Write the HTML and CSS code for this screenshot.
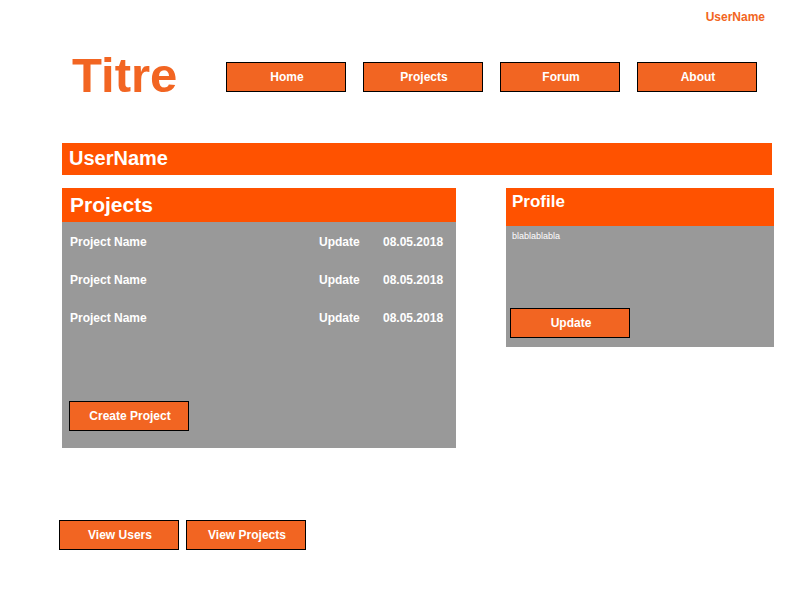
FILE: index.html
```html
<!DOCTYPE html>
<html lang="en">
<head>
<meta charset="utf-8">
<title>Titre</title>
<link rel="stylesheet" href="styles.css">
</head>
<body>
<div class="page">
  <div class="account"><a href="#">UserName</a></div>
  <header class="header">
    <h1 class="logo">Titre</h1>
    <nav class="nav">
      <a class="button" href="#">Home</a>
      <a class="button" href="#">Projects</a>
      <a class="button" href="#">Forum</a>
      <a class="button" href="#">About</a>
    </nav>
  </header>
  <h2 class="banner">UserName</h2>
  <main class="content">
    <section class="panel projects">
      <h2 class="panel-title">Projects</h2>
      <div class="panel-body">
        <table class="project-list">
          <tbody>
            <tr><td>Project Name</td><td class="action"><a href="#">Update</a></td><td class="date">08.05.2018</td></tr>
            <tr><td>Project Name</td><td class="action"><a href="#">Update</a></td><td class="date">08.05.2018</td></tr>
            <tr><td>Project Name</td><td class="action"><a href="#">Update</a></td><td class="date">08.05.2018</td></tr>
          </tbody>
        </table>
        <button class="button" type="button">Create Project</button>
      </div>
    </section>
    <section class="panel profile">
      <h2 class="panel-title">Profile</h2>
      <div class="panel-body">
        <p class="bio">blablablabla</p>
        <button class="button" type="button">Update</button>
      </div>
    </section>
  </main>
  <footer class="footer">
    <button class="button" type="button">View Users</button>
    <button class="button" type="button">View Projects</button>
  </footer>
</div>
</body>
</html>
```
FILE: styles.css
```css
* {
  box-sizing: border-box;
}

body {
  margin: 0;
  background: #fff;
  font: bold 12px/14px "Liberation Sans", Arial, sans-serif;
  color: #fff;
}

a {
  color: inherit;
  text-decoration: none;
}

h1,
h2,
p {
  margin: 0;
}

.page {
  padding: 10px 26px 50px 62px;
}

.account {
  padding-right: 9px;
  color: #f26522;
  text-align: right;
}

.button {
  display: block;
  width: 120px;
  height: 30px;
  padding: 0 0 0 2px;
  border: 1px solid #000;
  background: #f26522;
  color: #fff;
  font: inherit;
  line-height: 29px;
  text-align: center;
}

.header {
  display: flex;
  align-items: center;
  justify-content: space-between;
  margin-top: 25px;
  padding: 0 17px 0 10px;
}

.logo {
  padding-bottom: 4px;
  color: #f26522;
  font-size: 49px;
  line-height: 52px;
}

.nav {
  display: flex;
  gap: 17px;
}

.banner {
  height: 32px;
  margin: 38px 2px 0 0;
  padding-left: 7px;
  background: #ff5200;
  font-size: 20px;
  line-height: 31px;
}

.content {
  display: grid;
  grid-template-columns: 394fr 268fr;
  gap: 50px;
  align-items: start;
  margin-top: 13px;
}

.panel {
  background: #999;
}

.panel-title {
  height: 34px;
  padding-left: 8px;
  background: #ff5200;
  font-size: 21px;
  line-height: 34px;
}

.panel-body {
  padding: 1px 7px 17px;
}

.project-list {
  width: 100%;
  margin-bottom: 64px;
  border-collapse: collapse;
}

.project-list tr {
  height: 38px;
}

.project-list td {
  padding: 0 1px;
}

.project-list .action {
  width: 64px;
}

.project-list .date {
  width: 67px;
}

.profile .panel-title {
  height: 38px;
  padding-left: 6px;
  font-size: 17px;
  line-height: 28px;
}

.profile .panel-body {
  padding: 4px 4px 9px;
}

.bio {
  margin-bottom: 66px;
  padding-left: 2px;
  font-size: 9px;
  font-weight: normal;
  line-height: 12px;
}

.footer {
  display: flex;
  gap: 7px;
  margin: 72px 0 0 -3px;
}
```
